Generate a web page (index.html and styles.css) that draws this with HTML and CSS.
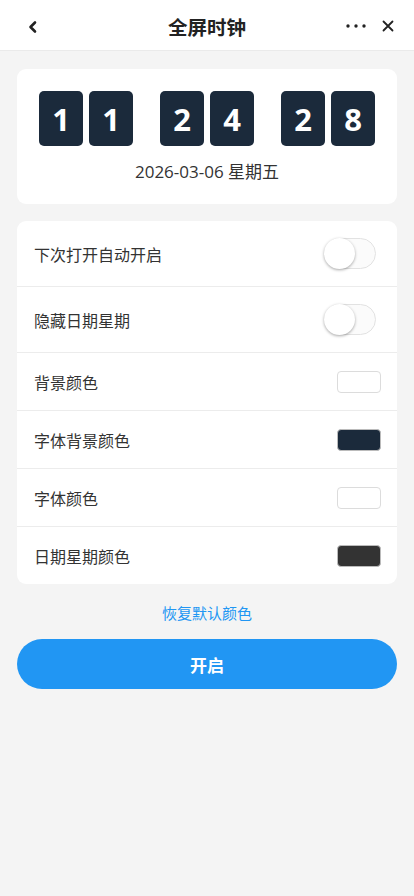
FILE: index.html
```html
<!DOCTYPE html>
<html lang="zh-CN">
<head>
<meta charset="UTF-8">
<meta name="viewport" content="width=device-width, initial-scale=1.0">
<title>全屏时钟</title>
<link rel="stylesheet" href="styles.css">
</head>
<body>

<div class="nav">
    <div class="nav-left">
        <svg width="12" height="14" viewBox="0 0 12 14"><path d="M8 2.5 L3.5 7 L8 11.5" fill="none" stroke="#222" stroke-width="2.6" stroke-linecap="round" stroke-linejoin="round"/></svg>
    </div>
    <div class="nav-title">全屏时钟</div>
    <div class="nav-right">
        <svg width="20" height="6" viewBox="0 0 20 6"><circle cx="2" cy="3" r="1.7" fill="#222"/><circle cx="10" cy="3" r="1.7" fill="#222"/><circle cx="18" cy="3" r="1.7" fill="#222"/></svg>
        <svg width="12" height="12" viewBox="0 0 12 12"><path d="M1.5 1.5 L10.5 10.5 M10.5 1.5 L1.5 10.5" stroke="#222" stroke-width="1.8" stroke-linecap="round"/></svg>
    </div>
</div>

<div class="page">
    <div class="card clock">
        <div class="digits">
            <div class="group"><span class="digit">1</span><span class="digit">1</span></div>
            <div class="group"><span class="digit">2</span><span class="digit">4</span></div>
            <div class="group"><span class="digit">2</span><span class="digit">8</span></div>
        </div>
        <div class="date">2026-03-06 星期五</div>
    </div>

    <div class="card list">
        <div class="row tall">
            <span>下次打开自动开启</span>
            <span class="switch"><span class="knob"></span></span>
        </div>
        <div class="row tall">
            <span>隐藏日期星期</span>
            <span class="switch"><span class="knob"></span></span>
        </div>
        <div class="row">
            <span>背景颜色</span>
            <span class="swatch white"></span>
        </div>
        <div class="row">
            <span>字体背景颜色</span>
            <span class="swatch navy"></span>
        </div>
        <div class="row">
            <span>字体颜色</span>
            <span class="swatch white"></span>
        </div>
        <div class="row">
            <span>日期星期颜色</span>
            <span class="swatch dark"></span>
        </div>
    </div>

    <div class="reset">恢复默认颜色</div>

    <button class="start">开启</button>
</div>

</body>
</html>
```
FILE: styles.css
```css
body {
    margin: 0;
    padding: 0;
    background-color: #f4f4f4;
    font-family: "Open Sans", "Noto Sans CJK SC", sans-serif;
    color: #333;
}

.nav {
    height: 51px;
    background-color: #fff;
    border-bottom: 1px solid #eaeaea;
    display: flex;
    align-items: center;
    justify-content: space-between;
    padding: 0 20px;
    box-sizing: border-box;
}

.nav-left {
    width: 60px;
    display: flex;
    align-items: center;
    padding-top: 3px;
    padding-left: 7px;
    box-sizing: border-box;
}

.nav-title {
    font-size: 19.5px;
    font-weight: bold;
    color: #222;
    padding-top: 2px;
}

.nav-right {
    width: 60px;
    display: flex;
    align-items: center;
    justify-content: flex-end;
    gap: 16px;
    padding-top: 2px;
}

.page {
    padding: 18px 17px;
}

.card {
    background-color: #fff;
    border-radius: 9px;
}

.clock {
    height: 135px;
    box-sizing: border-box;
    padding-top: 22px;
    display: flex;
    flex-direction: column;
    align-items: center;
}

.digits {
    display: flex;
    gap: 27px;
}

.group {
    display: flex;
    gap: 6px;
}

.digit {
    width: 44px;
    height: 55px;
    border-radius: 5px;
    background-color: #1b2a3b;
    color: #fff;
    font-size: 31px;
    font-weight: bold;
    display: flex;
    align-items: center;
    justify-content: center;
}

.date {
    margin-top: 12px;
    font-size: 17px;
    color: #333;
}

.list {
    margin-top: 17px;
    overflow: hidden;
}

.row {
    height: 57px;
    display: flex;
    align-items: center;
    justify-content: space-between;
    padding: 0 16px 0 17px;
    border-top: 1px solid #ececec;
    font-size: 16px;
}

.row:first-child {
    border-top: none;
}

.row.tall {
    height: 65px;
}

.switch {
    width: 52px;
    height: 31px;
    box-sizing: border-box;
    border: 1px solid #e2e2e2;
    border-radius: 16px;
    background-color: #fbfbfb;
    position: relative;
    margin-right: 5px;
}

.knob {
    position: absolute;
    left: -1px;
    top: -1px;
    width: 31px;
    height: 31px;
    border-radius: 50%;
    background-color: #fff;
    box-shadow: 0 1px 3px rgba(0, 0, 0, 0.35);
}

.swatch {
    width: 44px;
    height: 22px;
    box-sizing: border-box;
    border-radius: 4px;
}

.swatch.white {
    background-color: #fff;
    border: 1px solid #dcdcdc;
}

.swatch.navy {
    background-color: #1b2a3b;
    border: 1px solid #bbb;
}

.swatch.dark {
    background-color: #333;
    border: 1px solid #bbb;
}

.reset {
    text-align: center;
    color: #2196f3;
    font-size: 15px;
    margin-top: 18px;
}

.start {
    display: block;
    width: 100%;
    height: 50px;
    margin-top: 16px;
    border: none;
    border-radius: 25px;
    background-color: #2196f3;
    color: #fff;
    font-family: "Open Sans", "Noto Sans CJK SC", sans-serif;
    font-size: 17px;
    font-weight: bold;
}
```
